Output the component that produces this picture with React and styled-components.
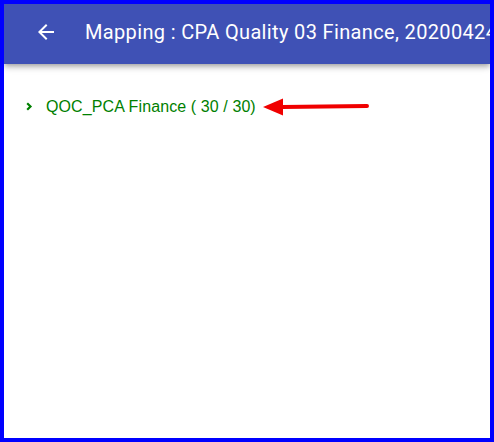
import React from "react";
import styled, { createGlobalStyle } from "styled-components";

const Global = createGlobalStyle`
  html, body { margin: 0; padding: 0; background: #fff; }
  #root { width: 494px; height: 442px; }
`;

const Frame = styled.div`
  box-sizing: border-box;
  width: 494px;
  height: 442px;
  border: 4px solid #0000ff;
  background: #fff;
  overflow: hidden;
  display: flex;
  flex-direction: column;
`;

const Header = styled.header`
  box-sizing: border-box;
  height: 60px;
  flex: none;
  display: flex;
  align-items: center;
  padding: 0 0 4px 30px;
  gap: 27px;
  background: #3f51b5;
  color: #fff;
  position: relative;
  z-index: 1;
  box-shadow: 0 2px 4px -1px rgba(0,0,0,.2), 0 4px 5px 0 rgba(0,0,0,.14), 0 1px 10px 0 rgba(0,0,0,.12);
`;

const IconButton = styled.span`
  width: 24px;
  height: 24px;
  flex: none;
  display: flex;
  align-items: center;
  justify-content: center;
`;

const Title = styled.h1`
  margin: 0;
  font-family: Roboto, "Liberation Sans", sans-serif;
  font-size: 20px;
  font-weight: 400;
  letter-spacing: 0.35px;
  white-space: nowrap;
  overflow: hidden;
  flex: 1;
  min-width: 0;
`;

const Content = styled.main`
  flex: 1;
  padding: 34px 0 0 20px;
`;

const TreeRow = styled.div`
  display: flex;
  align-items: center;
  height: 18px;
`;

const Chevron = styled.span`
  width: 10px;
  height: 10px;
  display: flex;
  align-items: center;
  justify-content: center;
  margin-right: 12px;
  margin-top: -2px;
`;

const Label = styled.span`
  font-family: "Liberation Sans", Arial, sans-serif;
  font-size: 16px;
  letter-spacing: 0.1px;
  color: #008000;
  white-space: nowrap;
`;

const Pointer = styled.svg`
  margin-left: 7px;
  margin-top: -1px;
  flex: none;
`;

export default function App() {
  return (
    <>
      <Global />
      <Frame>
        <Header>
          <IconButton>
            <svg width="24" height="24" viewBox="0 0 24 24">
              <path fill="#fff" d="M20 11H7.83l5.59-5.59L12 4l-8 8 8 8 1.41-1.41L7.83 13H20v-2z" />
            </svg>
          </IconButton>
          <Title>Mapping : CPA Quality 03 Finance, 20200424</Title>
        </Header>
        <Content>
          <TreeRow>
            <Chevron>
              <svg width="7" height="9" viewBox="0 0 7 9">
                <path d="M1.2 1.2l3.3 3.3-3.3 3.3" fill="none" stroke="#008000" strokeWidth="2.2" />
              </svg>
            </Chevron>
            <Label>QOC_PCA Finance ( 30 / 30)</Label>
            <Pointer width="106" height="18" viewBox="0 0 106 18">
              <polygon points="0,9 20,0.5 20,17.5" fill="#f00000" />
              <line x1="19" y1="9" x2="104" y2="8" stroke="#f00000" strokeWidth="4" strokeLinecap="round" />
            </Pointer>
          </TreeRow>
        </Content>
      </Frame>
    </>
  );
}
